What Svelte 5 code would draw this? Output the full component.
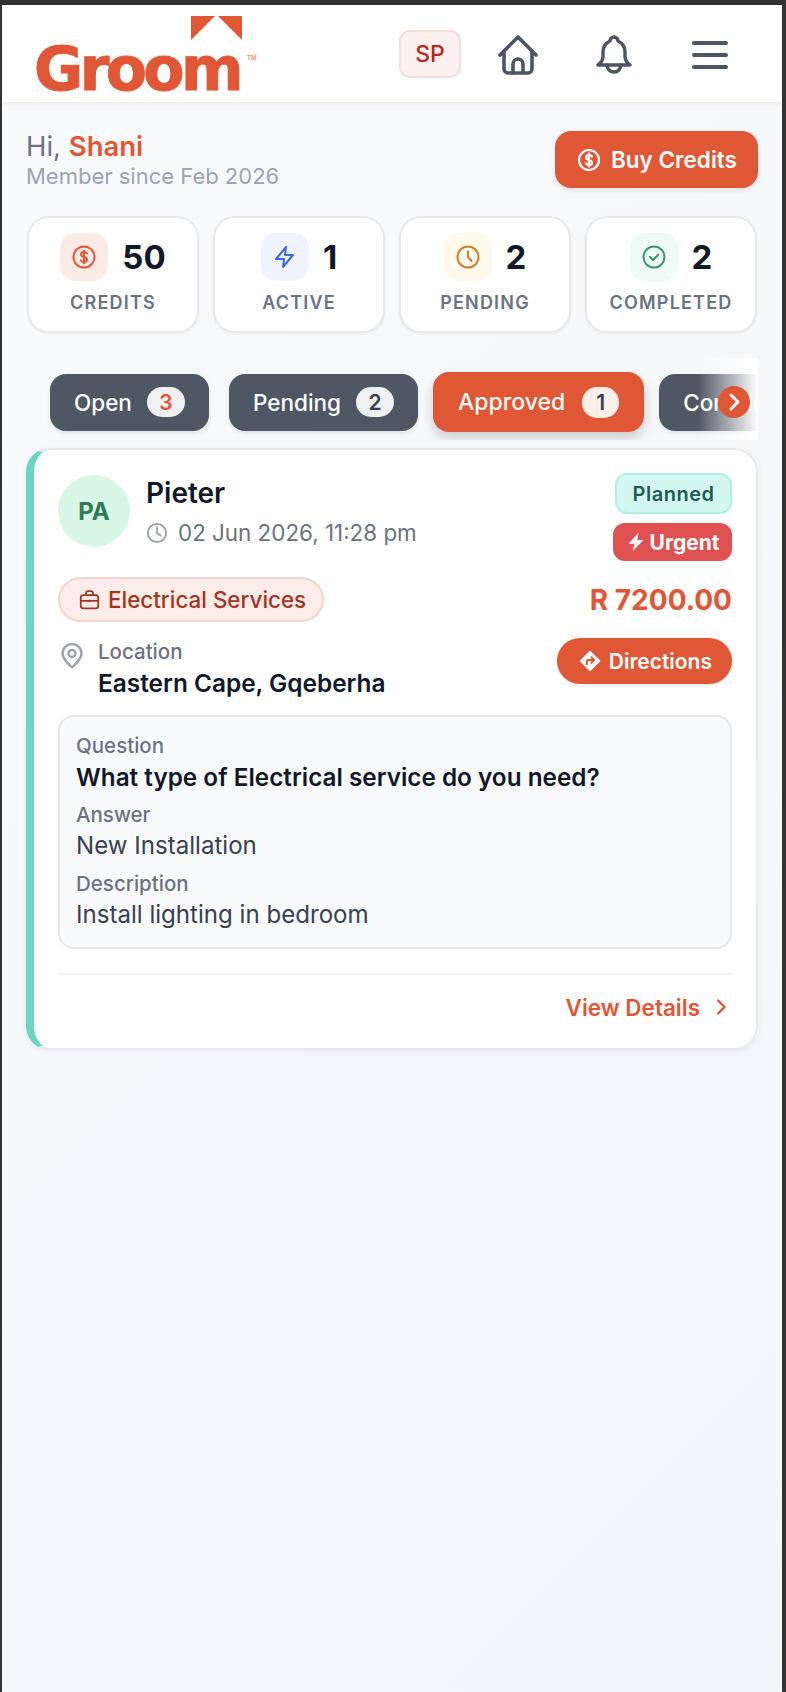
<script lang="ts">
	const stats = [
		{ key: 'credits', value: 50, label: 'CREDITS' },
		{ key: 'active', value: 1, label: 'ACTIVE' },
		{ key: 'pending', value: 2, label: 'PENDING' },
		{ key: 'completed', value: 2, label: 'COMPLETED' }
	];
	const tabs = [
		{ label: 'Open', count: 3 },
		{ label: 'Pending', count: 2 },
		{ label: 'Approved', count: 1, active: true },
		{ label: 'Completed', count: 2 }
	];
</script>

<div class="frame">
	<header class="topbar">
		<div class="logo">
			<svg class="roof" viewBox="0 0 51 24" width="51" height="24" aria-hidden="true">
				<path d="M0 0H24L0 24Z M27 0H51V24Z" fill="#df5735" />
			</svg>
			<span class="wordmark">Groom</span>
			<span class="tm">TM</span>
		</div>
		<div class="actions">
			<span class="initials">SP</span>
			<svg class="nav-icon" viewBox="0 0 40 40" width="40" height="40" fill="none" stroke="#4b5563" stroke-width="3.6" stroke-linecap="round" stroke-linejoin="round" aria-hidden="true">
				<path d="M2 20 20 2l18 18" />
				<path d="M6 17v17a4 4 0 0 0 4 4h20a4 4 0 0 0 4-4V17" />
				<path d="M15 38v-9a5 5 0 0 1 10 0v9" />
			</svg>
			<svg class="nav-icon bell" viewBox="0 0 36 40" width="36" height="40" fill="none" stroke="#4b5563" stroke-width="3.4" stroke-linecap="round" stroke-linejoin="round" aria-hidden="true">
				<path d="M14 6a4 4 0 0 1 8 0c4 2 7 6 7 11v4c0 4 2 7 5 9H2c3-2 5-5 5-9v-4c0-5 3-9 7-11Z" />
				<path d="M11 30a7 7 0 0 0 14 0" />
			</svg>
			<svg class="nav-icon" viewBox="0 0 36 28" width="36" height="28" fill="none" stroke="#4b5563" stroke-width="4" stroke-linecap="round" aria-hidden="true">
				<path d="M2 2h32M2 14h32M2 26h32" />
			</svg>
		</div>
	</header>

	<main class="content">
		<section class="welcome">
			<div>
				<p class="hello">Hi, <strong>Shani</strong></p>
				<p class="since">Member since Feb 2026</p>
			</div>
			<button class="buy" type="button">
				<svg viewBox="0 0 24 24" width="24" height="24" fill="none" stroke="currentColor" stroke-width="2.2" stroke-linecap="round" stroke-linejoin="round" aria-hidden="true">
					<circle cx="12" cy="12" r="10" />
					<path d="M15 8.500c-.5-1-1.600-1.500-3-1.500-1.800 0-3 .9-3 2.400 0 3.300 6 1.800 6 5 0 1.500-1.200 2.600-3 2.600-1.500 0-2.600-.6-3.100-1.700M12 5.500v13" />
				</svg>
				Buy Credits
			</button>
		</section>

		<section class="stats">
			{#each stats as stat}
				<div class="stat">
					<div class="stat-top">
						<span class="tile {stat.key}">
							<svg viewBox="0 0 24 24" width="24" height="24" fill="none" stroke="currentColor" stroke-width="2" stroke-linecap="round" stroke-linejoin="round" aria-hidden="true">
								{#if stat.key === 'credits'}
									<circle cx="12" cy="12" r="10.500" />
									<path d="M15 8.500c-.5-1-1.600-1.500-3-1.500-1.800 0-3 .9-3 2.400 0 3.300 6 1.800 6 5 0 1.500-1.200 2.600-3 2.600-1.500 0-2.600-.6-3.100-1.700M12 5.500v13" />
								{:else if stat.key === 'active'}
									<path d="M13 2 3 14h8l-1 8 10-12h-8l1-8Z" />
								{:else if stat.key === 'pending'}
									<circle cx="12" cy="12" r="10.500" />
									<path d="M12 6.500V12l3.500 4" />
								{:else}
									<circle cx="12" cy="12" r="10.500" />
									<path d="m8 12 3 3 5.500-5.500" />
								{/if}
							</svg>
						</span>
						<span class="value">{stat.value}</span>
					</div>
					<span class="label">{stat.label}</span>
				</div>
			{/each}
		</section>

		<section class="tabs-wrap">
			<div class="tabs">
				{#each tabs as tab}
					<button class="tab" class:active={tab.active} type="button">
						{tab.label}
						<span class="count" class:hot={tab.count === 3}>{tab.count}</span>
					</button>
				{/each}
			</div>
			<div class="fade"></div>
			<span class="scroll-next">
				<svg viewBox="0 0 24 24" width="24" height="24" fill="none" stroke="#fff" stroke-width="3" stroke-linecap="round" stroke-linejoin="round" aria-hidden="true">
					<path d="m9 5 7 7-7 7" />
				</svg>
			</span>
		</section>

		<article class="job">
			<div class="job-head">
				<span class="avatar">PA</span>
				<div class="who">
					<h2>Pieter</h2>
					<p class="when">
						<svg viewBox="0 0 24 24" width="22" height="22" fill="none" stroke="#9ca3af" stroke-width="2" stroke-linecap="round" stroke-linejoin="round" aria-hidden="true">
							<circle cx="12" cy="12" r="10" />
							<path d="M12 6v6l4 3" />
						</svg>
						02 Jun 2026, 11:28 pm
					</p>
				</div>
				<div class="badges">
					<span class="planned">Planned</span>
					<span class="urgent">
						<svg viewBox="0 0 24 24" width="20" height="20" fill="#fff" aria-hidden="true">
							<path d="M15 1 3 14h7L8 23 21 9.500h-7.500L15 1Z" />
						</svg>
						Urgent
					</span>
				</div>
			</div>

			<div class="job-row">
				<span class="category">
					<svg viewBox="0 0 24 24" width="21" height="21" fill="none" stroke="currentColor" stroke-width="2" stroke-linecap="round" stroke-linejoin="round" aria-hidden="true">
						<rect x="2" y="7" width="20" height="15" rx="3" />
						<path d="M8 7V5a2.500 2.500 0 0 1 2.500-2.500h3A2.500 2.500 0 0 1 16 5v2M2 13.500h20M12 13v1" />
					</svg>
					Electrical Services
				</span>
				<span class="price">R 7200.00</span>
			</div>

			<div class="job-row location-row">
				<div class="location">
					<svg viewBox="0 0 24 26" width="24" height="26" fill="none" stroke="#9ca3af" stroke-width="2.400" stroke-linecap="round" stroke-linejoin="round" aria-hidden="true">
						<path d="M12 24.500C7 19.500 2.500 15.500 2.500 10.500a9.500 9.500 0 0 1 19 0c0 5-4.500 9-9.500 14Z" />
						<circle cx="12" cy="10.500" r="3.500" />
					</svg>
					<div class="location-text">
						<span class="small-label">Location</span>
						<strong>Eastern Cape, Gqeberha</strong>
					</div>
				</div>
				<button class="directions" type="button">
					<svg viewBox="0 0 24 24" width="22" height="22" aria-hidden="true">
						<path fill="#fff" d="M12 1.500 22.500 12 12 22.500 1.500 12Z" stroke="#fff" stroke-width="1.500" stroke-linejoin="round" />
						<path fill="none" stroke="#df5735" stroke-width="2.200" stroke-linecap="round" stroke-linejoin="round" d="M8.500 15.500V12.500a1.500 1.500 0 0 1 1.500-1.500h6M13.500 8l3 3-3 3" />
					</svg>
					Directions
				</button>
			</div>

			<div class="qa">
				<span class="small-label">Question</span>
				<p class="question">What type of Electrical service do you need?</p>
				<span class="small-label">Answer</span>
				<p class="answer">New Installation</p>
				<span class="small-label">Description</span>
				<p class="answer">Install lighting in bedroom</p>
			</div>

			<div class="job-foot">
				<a class="details" href="#details">
					View Details
					<svg viewBox="0 0 24 24" width="22" height="22" fill="none" stroke="currentColor" stroke-width="2.600" stroke-linecap="round" stroke-linejoin="round" aria-hidden="true">
						<path d="m9 5 7 7-7 7" />
					</svg>
				</a>
			</div>
		</article>
	</main>
</div>

<style>
	:global(body) {
		background: #333;
		font-family: Inter, 'Liberation Sans', sans-serif;
	}
	p,
	h2 {
		margin: 0;
	}
	button {
		border: none;
		font-family: inherit;
	}
	.frame {
		box-sizing: border-box;
		height: 1687px;
		margin: 5px 4px 0 2px;
		overflow: hidden;
		background: linear-gradient(135deg, #f9fafc 0%, #f4f5f8 100%);
	}
	.topbar {
		display: flex;
		align-items: flex-start;
		justify-content: space-between;
		box-sizing: border-box;
		height: 97px;
		padding: 11px 54px 0 33px;
		background: #fff;
		box-shadow: 0 1px 4px rgba(17, 24, 39, 0.08);
	}
	.logo {
		position: relative;
		width: 222px;
		height: 80px;
	}
	.roof {
		position: absolute;
		top: 0;
		left: 156px;
	}
	.wordmark {
		position: absolute;
		top: 18px;
		left: -1px;
		font-family: 'DejaVu Sans', sans-serif;
		font-size: 60px;
		font-weight: 700;
		line-height: 70px;
		letter-spacing: -3.600px;
		color: #df5735;
		-webkit-text-stroke: 1px #df5735;
	}
	.tm {
		position: absolute;
		top: 38px;
		left: 212px;
		font-size: 6px;
		font-weight: 600;
		color: #e88b74;
	}
	.actions {
		display: flex;
		align-items: center;
		height: 66px;
		padding-top: 6px;
	}
	.initials {
		display: flex;
		align-items: center;
		justify-content: center;
		box-sizing: border-box;
		width: 62px;
		height: 48px;
		margin-top: -2px;
		margin-right: 37px;
		border: 2px solid #f9ddd8;
		border-radius: 11px;
		background: #fdf1ef;
		color: #b02a1e;
		font-size: 23px;
		font-weight: 500;
	}
	.nav-icon {
		display: block;
	}
	.bell {
		margin: 0 60px 0 58px;
	}
	.content {
		padding: 0 24px;
	}
	.welcome {
		display: flex;
		align-items: flex-start;
		justify-content: space-between;
		padding-top: 28px;
	}
	.hello {
		font-size: 27.500px;
		line-height: 32px;
		color: #6b7280;
	}
	.hello strong {
		font-weight: 600;
		color: #df5735;
	}
	.since {
		font-size: 22px;
		line-height: 28px;
		color: #9ca3af;
	}
	.buy {
		display: flex;
		align-items: center;
		gap: 10px;
		width: 203px;
		height: 57px;
		margin-top: 1px;
		padding: 0 0 0 22px;
		border-radius: 16px;
		background: #df5735;
		color: #fff;
		font-size: 22.500px;
		font-weight: 600;
		box-shadow: 0 2px 5px rgba(17, 24, 39, 0.1);
	}
	.stats {
		display: grid;
		grid-template-columns: repeat(4, 1fr);
		gap: 14px;
		margin-top: 26px;
		padding: 0 1px;
	}
	.stat {
		display: flex;
		flex-direction: column;
		align-items: center;
		box-sizing: border-box;
		height: 117px;
		padding-top: 15px;
		border: 2px solid #e8e9ed;
		border-radius: 22px;
		background: #fff;
		box-shadow: 0 1px 3px rgba(17, 24, 39, 0.05);
	}
	.stat-top {
		display: flex;
		align-items: center;
		gap: 14px;
		height: 48px;
	}
	.tile {
		display: flex;
		align-items: center;
		justify-content: center;
		width: 48px;
		height: 48px;
		border-radius: 15px;
	}
	.tile.credits {
		background: #faebe7;
		color: #df5735;
	}
	.tile.active {
		background: #eff4ff;
		color: #3b68e8;
	}
	.tile.pending {
		background: #fffaeb;
		color: #d07d2c;
	}
	.tile.completed {
		background: #eefcf5;
		color: #38976b;
	}
	.value {
		font-size: 33px;
		font-weight: 700;
		color: #111827;
	}
	.label {
		margin-top: 11px;
		font-size: 18px;
		font-weight: 600;
		letter-spacing: 1.200px;
		color: #6b7280;
	}
	.tabs-wrap {
		position: relative;
		height: 82px;
		margin-top: 25px;
		margin-left: 1px;
		overflow: hidden;
	}
	.tabs {
		display: flex;
		align-items: center;
		gap: 20px;
		height: 88px;
		padding-left: 23px;
	}
	.tab {
		display: flex;
		flex: none;
		align-items: center;
		gap: 15px;
		height: 57px;
		padding: 0 24px;
		border-radius: 16px;
		background: #4f5765;
		color: #fff;
		font-size: 22.500px;
		font-weight: 500;
		box-shadow: 0 2px 4px rgba(17, 24, 39, 0.1);
	}
	.tab.active {
		gap: 17px;
		height: 60px;
		margin: 0 -5px;
		padding: 0 25px;
		background: #df5735;
		font-size: 23px;
		box-shadow: 0 6px 12px rgba(17, 24, 39, 0.2);
	}
	.count {
		display: flex;
		align-items: center;
		justify-content: center;
		min-width: 38px;
		height: 30px;
		border-radius: 15px;
		background: #eef0f2;
		color: #374151;
		font-size: 21px;
		font-weight: 600;
	}
	.active .count {
		min-width: 37px;
		height: 31px;
		background: #faeee9;
	}
	.count.hot {
		color: #df5735;
	}
	.fade {
		position: absolute;
		top: 0;
		right: 0;
		bottom: 0;
		width: 60px;
		background: linear-gradient(90deg, rgba(255, 255, 255, 0), #fff);
	}
	.scroll-next {
		position: absolute;
		top: 28px;
		right: 8px;
		display: flex;
		align-items: center;
		justify-content: center;
		width: 32px;
		height: 32px;
		border-radius: 50%;
		background: #df5735;
	}
	.job {
		box-sizing: border-box;
		height: 602px;
		margin-top: 8px;
		padding: 23px 24px 0 24px;
		border: 2px solid #e8e9ed;
		border-left: 8px solid #6bd5c2;
		border-radius: 24px;
		background: #fff;
		box-shadow: 0 2px 6px rgba(17, 24, 39, 0.06);
	}
	.job-head {
		display: flex;
		align-items: flex-start;
		height: 104px;
	}
	.avatar {
		display: flex;
		flex: none;
		align-items: center;
		justify-content: center;
		width: 72px;
		height: 72px;
		margin-top: 2px;
		border-radius: 50%;
		background: #d9f7e6;
		color: #2f7a5a;
		font-size: 24px;
		font-weight: 700;
	}
	.who {
		flex: 1;
		padding-left: 16px;
	}
	h2 {
		padding-top: 2px;
		font-size: 28px;
		font-weight: 600;
		line-height: 36px;
		color: #111827;
	}
	.when {
		display: flex;
		align-items: center;
		gap: 10px;
		margin-top: 9px;
		font-size: 22.400px;
		line-height: 26px;
		color: #6b7280;
	}
	.badges {
		display: flex;
		flex-direction: column;
		align-items: flex-end;
		gap: 9px;
	}
	.planned {
		display: flex;
		align-items: center;
		justify-content: center;
		box-sizing: border-box;
		width: 117px;
		height: 41px;
		border: 2px solid #aef2e0;
		border-radius: 12px;
		background: #d3f8ef;
		color: #1f5c54;
		font-size: 20px;
		font-weight: 600;
		letter-spacing: 0.500px;
	}
	.urgent {
		display: flex;
		align-items: center;
		justify-content: center;
		gap: 4px;
		width: 119px;
		height: 38px;
		border-radius: 12px;
		background: #df5050;
		color: #fff;
		font-size: 21px;
		font-weight: 700;
	}
	.job-row {
		display: flex;
		align-items: center;
		justify-content: space-between;
	}
	.category {
		display: flex;
		align-items: center;
		gap: 8px;
		box-sizing: border-box;
		height: 45px;
		padding: 0 16px 0 19px;
		border: 2px solid #f5d5ca;
		border-radius: 23px;
		background: #faece8;
		color: #a33520;
		font-size: 22.400px;
		font-weight: 500;
	}
	.price {
		font-size: 28px;
		font-weight: 700;
		color: #df5735;
	}
	.location-row {
		align-items: flex-start;
		margin-top: 16px;
	}
	.location {
		display: flex;
		gap: 14px;
		padding-left: 2px;
	}
	.location svg {
		margin-top: 5px;
	}
	.location-text {
		padding-top: 1px;
	}
	.location strong {
		display: block;
		font-size: 24.400px;
		font-weight: 600;
		line-height: 36px;
		color: #111827;
	}
	.small-label {
		display: block;
		font-size: 20.500px;
		font-weight: 500;
		line-height: 26px;
		color: #6b7280;
	}
	.directions {
		display: flex;
		align-items: center;
		gap: 8px;
		height: 46px;
		padding: 0 20px 0 22px;
		border-radius: 23px;
		background: #df5735;
		color: #fff;
		font-size: 21px;
		font-weight: 600;
		box-shadow: 0 1px 3px rgba(17, 24, 39, 0.12);
	}
	.qa {
		box-sizing: border-box;
		height: 234px;
		margin-top: 14px;
		padding: 15px 16px 0;
		border: 2px solid #e5e7eb;
		border-radius: 16px;
		background: #f9fafb;
	}
	.qa .small-label {
		line-height: 28px;
	}
	.question,
	.answer {
		margin-bottom: 7px;
		font-size: 24.100px;
		line-height: 34px;
	}
	.question {
		font-size: 24.300px;
		font-weight: 600;
		color: #111827;
	}
	.answer {
		color: #374151;
	}
	.job-foot {
		display: flex;
		justify-content: flex-end;
		margin-top: 24px;
		padding-top: 18px;
		border-top: 2px solid #f3f4f6;
	}
	.details {
		display: flex;
		align-items: center;
		gap: 10px;
		height: 28px;
		color: #df5735;
		font-size: 22.500px;
		font-weight: 600;
		text-decoration: none;
	}
</style>
